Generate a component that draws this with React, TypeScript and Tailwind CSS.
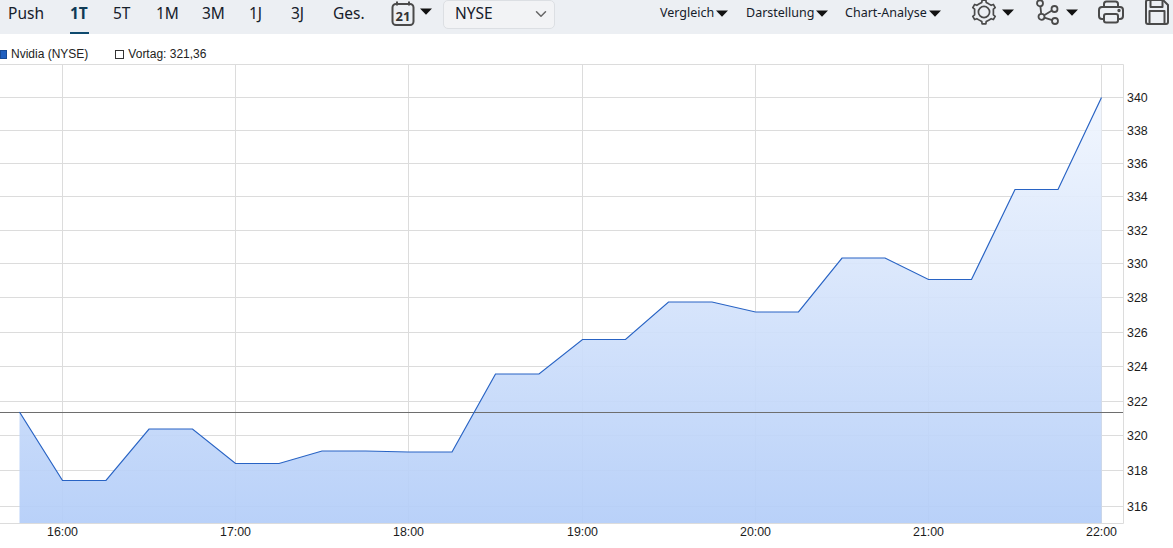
import { ChevronDown } from 'lucide-react';

const tabs = [
  { label: 'Push', width: 'w-[62px]' },
  { label: '1T', width: 'w-[43px]', active: true },
  { label: '5T', width: 'w-[43px]' },
  { label: '1M', width: 'w-[46px]' },
  { label: '3M', width: 'w-[47px]' },
  { label: '1J', width: 'w-[42px]' },
  { label: '3J', width: 'w-[42px]' },
  { label: 'Ges.', width: 'w-[58px]' },
];

// y positions of the log axis
const yTicks: [string, number][] = [
  ['340', 97.5],
  ['338', 130.5],
  ['336', 163.5],
  ['334', 196.5],
  ['332', 230.5],
  ['330', 263.5],
  ['328', 297.5],
  ['326', 332.5],
  ['324', 366.5],
  ['322', 401.5],
  ['320', 435.5],
  ['318', 470.5],
  ['316', 506.5],
];

const xTicks: [string, number][] = [
  ['16:00', 62.5],
  ['17:00', 235.5],
  ['18:00', 408.5],
  ['19:00', 582.5],
  ['20:00', 755.5],
  ['21:00', 928.5],
  ['22:00', 1101.5],
];

const line = [
  [19.5, 412], [62.5, 480.5], [106, 480.5], [149, 429], [192.5, 429], [235.5, 463.5],
  [279, 463.5], [322, 451], [365.5, 451], [408.5, 452], [452, 452], [495.5, 374],
  [539, 374], [582.5, 339.5], [625.5, 339.5], [668.5, 302], [712, 302], [755.5, 312],
  [798.5, 312], [842, 258], [885, 258], [928.5, 279.5], [971.5, 279.5], [1015, 189.5],
  [1058, 189.5], [1101.5, 97.5],
];

const linePoints = line.map((p) => p.join(',')).join(' ');
const areaPoints = `19.5,523 ${linePoints} 1101.5,523`;

// six teeth round the centre
const gearPoints = [90, 150, 210, 270, 330, 390]
  .flatMap((a) => [
    [a - 30, 9.4],
    [a - 13, 9.8],
    [a - 9, 12],
    [a + 9, 12],
    [a + 13, 9.8],
  ])
  .map(([a, r]) => {
    const rad = (a * Math.PI) / 180;
    return `${(13 + r * Math.cos(rad)).toFixed(2)},${(13 - r * Math.sin(rad)).toFixed(2)}`;
  })
  .join(' ');

function Caret({ className = '' }: { className?: string }) {
  return (
    <svg width="12" height="7" viewBox="0 0 12 7" className={className}>
      <path d="M0 0.5h12L6 6.8z" fill="#111" />
    </svg>
  );
}

function CalendarIcon() {
  return (
    <svg width="24" height="26" viewBox="0 0 24 26" fill="none" stroke="#4a4a4a" strokeWidth="2">
      <rect x="1.5" y="3" width="21" height="21" rx="3.5" />
      <path d="M6 0.5v4M18 0.5v4" />
      <text x="12" y="19.5" textAnchor="middle" fontSize="13" fontWeight="700" fill="#333" stroke="none" fontFamily="'Noto Sans', sans-serif">21</text>
    </svg>
  );
}

function GearIcon() {
  return (
    <svg width="26" height="26" viewBox="0 0 26 26" fill="none" stroke="#4a4a4a" strokeWidth="1.7" strokeLinejoin="round">
      <polygon points={gearPoints} />
      <circle cx="13" cy="13" r="5.6" />
    </svg>
  );
}

function NodesIcon() {
  return (
    <svg width="24" height="26" viewBox="0 0 24 26" fill="none" stroke="#4a4a4a" strokeWidth="1.8">
      <circle cx="4" cy="4.3" r="3" />
      <circle cx="18.5" cy="10" r="3" />
      <circle cx="5.5" cy="17.8" r="3" />
      <circle cx="19" cy="22" r="3" />
      <path d="M4.4 7.3l0.8 7.5M8.2 16.3l7.8-4.8M8.4 18.7l7.7 2.4" />
    </svg>
  );
}

function PrinterIcon() {
  return (
    <svg width="26" height="26" viewBox="0 0 26 26" fill="none" stroke="#4a4a4a" strokeWidth="2" strokeLinejoin="round">
      <path d="M6 8V5a2.5 2.5 0 0 1 2.5-2.5h9A2.5 2.5 0 0 1 20 5v3" />
      <path d="M6 20H4a3 3 0 0 1-3-3v-6a3 3 0 0 1 3-3h18a3 3 0 0 1 3 3v6a3 3 0 0 1-3 3h-2" />
      <rect x="6" y="15" width="14" height="8.5" rx="2" />
      <circle cx="21" cy="11.5" r="0.7" fill="#4a4a4a" />
    </svg>
  );
}

function SaveIcon() {
  return (
    <svg width="24" height="26" viewBox="0 0 24 26" fill="none" stroke="#4a4a4a" strokeWidth="2" strokeLinejoin="round">
      <path d="M1 3a2 2 0 0 1 2-2h15l5 5v17a2 2 0 0 1-2 2H3a2 2 0 0 1-2-2z" />
      <path d="M5.5 1v7h12V1" />
      <path d="M4.5 25V12h15v13" />
    </svg>
  );
}

function Chart() {
  return (
    <svg width="1173" height="514" viewBox="0 34 1173 514" className="block">
      <defs>
        <linearGradient id="area" x1="0" y1="97.5" x2="0" y2="523" gradientUnits="userSpaceOnUse">
          <stop offset="0" stopColor="#f1f6fe" />
          <stop offset="1" stopColor="#b3cdf8" />
        </linearGradient>
      </defs>
      <path d="M0 64.5H1123.5V523.5H0" fill="none" stroke="#dcdcdc" />
      {yTicks.map(([label, y]) => (
        <line key={label} x1="0" x2="1123" y1={y} y2={y} stroke="#dcdcdc" />
      ))}
      {xTicks.map(([label, x]) => (
        <line key={label} x1={x} x2={x} y1="64" y2="523" stroke="#dcdcdc" />
      ))}
      <polygon points={areaPoints} fill="url(#area)" fillOpacity="0.92" />
      <line x1="0" x2="1123" y1="412.5" y2="412.5" stroke="#6e6e6e" />
      <polyline points={linePoints} fill="none" stroke="#2863c4" strokeWidth="1.2" />
      <g fontFamily="'Liberation Sans', Arial, sans-serif" fontSize="12.4" fill="#1c1c1c">
        {yTicks.map(([label, y]) => (
          <text key={label} x="1127" y={y + 4.5}>{label}</text>
        ))}
        {xTicks.map(([label, x]) => (
          <text key={label} x={x} y="536" textAnchor="middle">{label}</text>
        ))}
      </g>
    </svg>
  );
}

export default function App() {
  return (
    <div className="relative w-[1173px] h-[548px] overflow-hidden bg-white font-['Noto_Sans',sans-serif]">
      {/* Toolbar */}
      <div className="flex items-center h-[34px] bg-[#eceff3] pl-2 text-[#16202a]">
        <div className="flex h-full">
          {tabs.map((tab) => (
            <div
              key={tab.label}
              className={`${tab.width} relative flex items-center text-[15.5px] pb-[6px] ${tab.active ? 'font-bold text-[#0f3a55]' : ''}`}
            >
              {tab.label}
              {tab.active && <span className="absolute left-0 bottom-0 w-[19px] h-[2px] bg-[#0f4a6e]" />}
            </div>
          ))}
        </div>
        <div className="flex items-center gap-[5px] w-[52px] mt-[-6px]">
          <CalendarIcon />
          <Caret className="mt-[-6px]" />
        </div>
        <div className="flex items-center justify-between w-[112px] h-[29px] mt-[-6px] pl-[11px] pr-[4px] bg-[#f2f3f5] border border-[#dcdfe3] rounded-[5px] text-[15.5px]">
          NYSE
          <ChevronDown size={18} color="#666" strokeWidth={2} />
        </div>
        <div className="flex items-center gap-[2px] ml-[105px] w-[86px] mt-[-8px] text-[12.5px]">
          Vergleich
          <Caret />
        </div>
        <div className="flex items-center gap-[2px] w-[99px] mt-[-8px] text-[12.5px]">
          Darstellung
          <Caret />
        </div>
        <div className="flex items-center gap-[2px] w-[126px] mt-[-8px] text-[12.5px]">
          Chart-Analyse
          <Caret />
        </div>
        <div className="flex items-center gap-[5px] w-[65px] mt-[-10px]">
          <GearIcon />
          <Caret />
        </div>
        <div className="flex items-center gap-[6px] w-[62px] mt-[-10px]">
          <NodesIcon />
          <Caret />
        </div>
        <div className="w-[47px] mt-[-10px]">
          <PrinterIcon />
        </div>
        <div className="mt-[-10px]">
          <SaveIcon />
        </div>
      </div>

      {/* Legend */}
      <div className="absolute left-0 top-[47px] z-10 flex items-center text-[12px] leading-[14px] text-[#222] font-['Liberation_Sans',Arial,sans-serif]">
        <span className="w-[7px] h-[9px] bg-[#1f5fbf] border border-[#174a96] mr-[4px]" />
        Nvidia (NYSE)
        <span className="w-[9px] h-[9px] bg-white border border-[#333] ml-[27px] mr-[4px]" />
        Vortag: 321,36
      </div>

      <Chart />
    </div>
  );
}
